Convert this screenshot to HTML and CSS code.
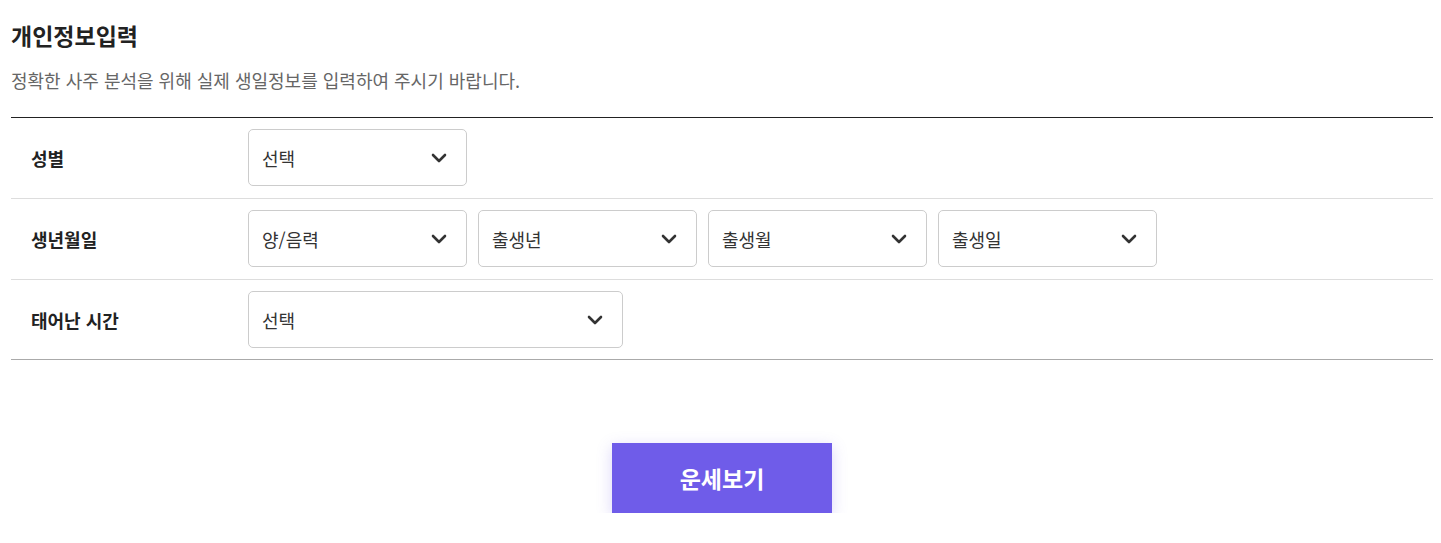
FILE: index.html
```html
<!DOCTYPE html>
<html lang="ko">
<head>
<meta charset="utf-8">
<link rel="stylesheet" href="styles.css">
</head>
<body>
<div class="wrap">
  <h2 class="title">개인정보입력</h2>
  <p class="desc">정확한 사주 분석을 위해 실제 생일정보를 입력하여 주시기 바랍니다.</p>
  <div class="form">
    <div class="row">
      <div class="label">성별</div>
      <div class="fields">
        <div class="select"><span>선택</span><svg class="chev" viewBox="0 0 16 10"><path d="M2 2l6 6 6-6"/></svg></div>
      </div>
    </div>
    <div class="row">
      <div class="label">생년월일</div>
      <div class="fields">
        <div class="select"><span>양/음력</span><svg class="chev" viewBox="0 0 16 10"><path d="M2 2l6 6 6-6"/></svg></div>
        <div class="select"><span>출생년</span><svg class="chev" viewBox="0 0 16 10"><path d="M2 2l6 6 6-6"/></svg></div>
        <div class="select"><span>출생월</span><svg class="chev" viewBox="0 0 16 10"><path d="M2 2l6 6 6-6"/></svg></div>
        <div class="select"><span>출생일</span><svg class="chev" viewBox="0 0 16 10"><path d="M2 2l6 6 6-6"/></svg></div>
      </div>
    </div>
    <div class="row last">
      <div class="label">태어난 시간</div>
      <div class="fields">
        <div class="select wide"><span>선택</span><svg class="chev" viewBox="0 0 16 10"><path d="M2 2l6 6 6-6"/></svg></div>
      </div>
    </div>
  </div>
  <div class="actions">
    <button class="btn">운세보기</button>
  </div>
</div>
</body>
</html>
```

FILE: styles.css
```css
* { box-sizing: border-box; }
html, body { margin: 0; padding: 0; background: #fff; }
body { font-family: "Noto Sans CJK KR", "Noto Sans", sans-serif; color: #222; }
.wrap { padding: 0 8px 0 11px; }
.title { margin: 0; padding-top: 20px; font-size: 23px; font-weight: 700; line-height: 30px; color: #222; }
.desc { margin: 17px 0 0; font-size: 18px; line-height: 26px; color: #666; }
.form { margin-top: 24px; border-top: 1px solid #222; border-bottom: 1px solid #aaa; }
.row { display: flex; align-items: center; padding: 11px 0 12px; border-bottom: 1px solid #ddd; }
.row.last { border-bottom: none; padding-bottom: 11px; }
.label { width: 237px; padding-left: 20px; font-size: 18px; font-weight: 700; color: #222; }
.fields { display: flex; gap: 11px; }
.select { width: 219px; height: 57px; border: 1px solid #ccc; border-radius: 5px; display: flex; align-items: center; justify-content: space-between; padding: 0 19px 0 13px; font-size: 18px; color: #333; }
.select.wide { width: 375px; }
.chev { width: 16px; height: 10px; fill: none; stroke: #333; stroke-width: 2.6; stroke-linecap: round; stroke-linejoin: round; }
.actions { display: flex; justify-content: center; padding-top: 83px; }
.btn { width: 220px; height: 70px; border: none; background: #6f5ce9; color: #fff; font-family: inherit; font-size: 23px; font-weight: 700; box-shadow: 0 4px 14px rgba(111, 92, 233, 0.25); }
```
